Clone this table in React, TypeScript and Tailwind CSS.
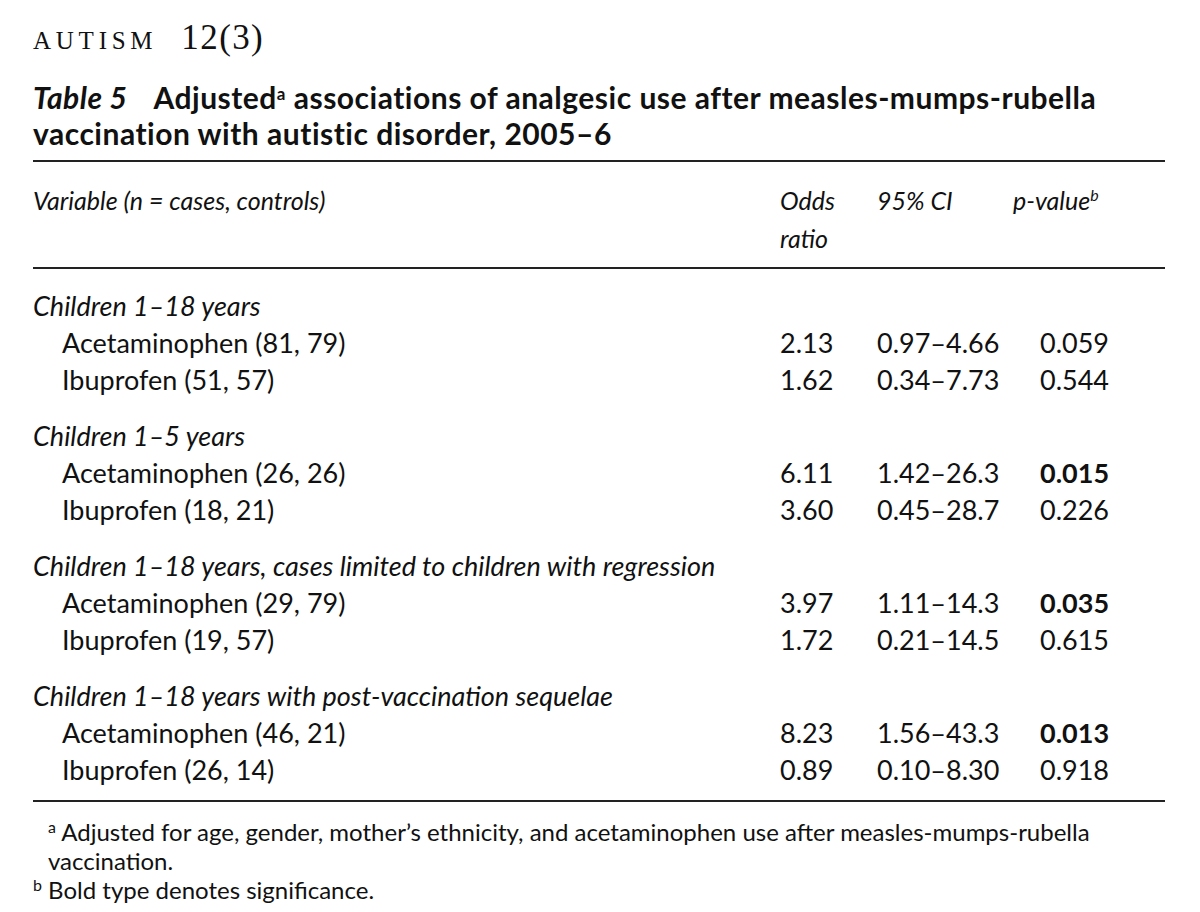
const rows = [
  {
    group: "Children 1–18 years",
    items: [
      { name: "Acetaminophen (81, 79)", or: "2.13", ci: "0.97–4.66", p: "0.059", sig: false },
      { name: "Ibuprofen (51, 57)", or: "1.62", ci: "0.34–7.73", p: "0.544", sig: false },
    ],
  },
  {
    group: "Children 1–5 years",
    items: [
      { name: "Acetaminophen (26, 26)", or: "6.11", ci: "1.42–26.3", p: "0.015", sig: true },
      { name: "Ibuprofen (18, 21)", or: "3.60", ci: "0.45–28.7", p: "0.226", sig: false },
    ],
  },
  {
    group: "Children 1–18 years, cases limited to children with regression",
    items: [
      { name: "Acetaminophen (29, 79)", or: "3.97", ci: "1.11–14.3", p: "0.035", sig: true },
      { name: "Ibuprofen (19, 57)", or: "1.72", ci: "0.21–14.5", p: "0.615", sig: false },
    ],
  },
  {
    group: "Children 1–18 years with post-vaccination sequelae",
    items: [
      { name: "Acetaminophen (46, 21)", or: "8.23", ci: "1.56–43.3", p: "0.013", sig: true },
      { name: "Ibuprofen (26, 14)", or: "0.89", ci: "0.10–8.30", p: "0.918", sig: false },
    ],
  },
];

export default function App() {
  return (
    <div className="w-[1200px] h-[912px] bg-white pl-[33px] pr-[35px] text-[#111] font-['Lato',sans-serif]">
      {/* running head */}
      <div className="pt-[20px] h-[62px] flex items-baseline font-['Liberation_Serif',serif]">
        <span className="text-[25px] uppercase tracking-[0.19em]">Autism</span>
        <span className="ml-[24px] text-[35px] leading-none tracking-[0.04em]">12(3)</span>
      </div>

      {/* caption */}
      <div className="mt-[17px] text-[30px] font-bold leading-[36px] tracking-[0.5px]">
        <span className="italic">Table 5</span>
        <span className="ml-[26px]">
          Adjusted<span className="align-[9px] text-[17px] leading-none">a</span> associations of analgesic use after measles-mumps-rubella
        </span>
        <br />
        vaccination with autistic disorder, 2005–6
      </div>

      <div className="mt-[9px] h-[2px] bg-[#222]" />

      {/* column heads */}
      <div className="grid grid-cols-[747px_97px_136px_1fr] pt-[19px] pb-[10px] text-[25px] italic leading-[38px]">
        <div>Variable (n = cases, controls)</div>
        <div>
          Odds
          <br />
          ratio
        </div>
        <div>95% CI</div>
        <div>
          p-value<span className="align-[9px] text-[16px] leading-none">b</span>
        </div>
      </div>

      <div className="h-[2px] bg-[#222]" />

      {/* body */}
      <div className="pt-[18px] flex flex-col gap-[19px] text-[27px] leading-[37px]">
        {rows.map((g) => (
          <div key={g.group}>
            <div className="italic">{g.group}</div>
            {g.items.map((r) => (
              <div key={r.name} className="grid grid-cols-[747px_97px_136px_1fr]">
                <div className="pl-[29px]">{r.name}</div>
                <div>{r.or}</div>
                <div>{r.ci}</div>
                <div className={r.sig ? "pl-[27px] font-bold" : "pl-[27px]"}>{r.p}</div>
              </div>
            ))}
          </div>
        ))}
      </div>

      <div className="mt-[12px] h-[2px] bg-[#222]" />

      {/* footnotes */}
      <div className="mt-[15px] text-[24px] leading-[29px]">
        <div className="pl-[15px]">
          <span className="align-[8px] text-[16px] leading-none">a</span> Adjusted for age, gender, mother’s ethnicity, and acetaminophen use after measles-mumps-rubella vaccination.
        </div>
        <div>
          <span className="align-[8px] text-[16px] leading-none">b</span> Bold type denotes significance.
        </div>
      </div>
    </div>
  );
}
